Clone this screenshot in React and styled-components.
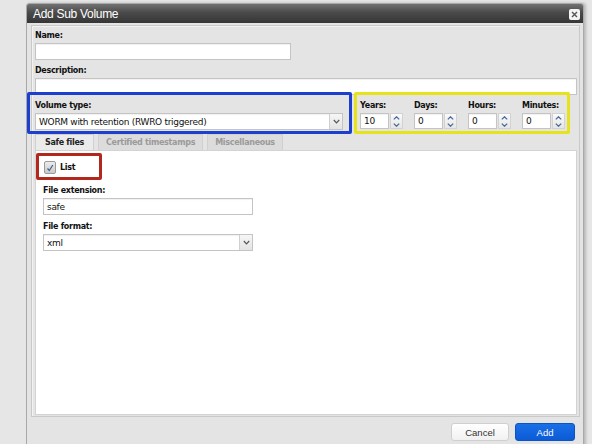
import React from "react";
import styled, { createGlobalStyle } from "styled-components";

const GlobalStyle = createGlobalStyle`
  html, body {
    margin: 0;
    padding: 0;
    background: #e6e6e6;
    font-family: "DejaVu Sans", Verdana, sans-serif;
    overflow: hidden;
  }
`;

const Page = styled.div`
  width: 592px;
  height: 444px;
  padding: 3px 0 0 26px;
  box-sizing: border-box;
  background: #e6e6e6;
`;

const Dialog = styled.div`
  width: 556px;
  height: 460px;
  background: #e4e4e4;
  border: 1px solid #a9a9a9;
  border-radius: 3px 3px 0 0;
  box-shadow: 2px 0 3px rgba(0, 0, 0, 0.2);
  display: flex;
  flex-direction: column;
`;

const TitleBar = styled.div`
  height: 19px;
  display: flex;
  align-items: center;
  justify-content: space-between;
  padding: 0 3px 0 6px;
  background: linear-gradient(#727272, #4a4a4a 45%, #363636);
  border-radius: 2px 2px 0 0;
`;

const Title = styled.span`
  color: #fff;
  font-family: "Liberation Sans", Arial, sans-serif;
  font-size: 12px;
  letter-spacing: -0.3px;
`;

const CloseButton = styled.div`
  width: 11px;
  height: 11px;
  background: #f4f4f4;
  border-radius: 2px;
  display: flex;
  align-items: center;
  justify-content: center;
  margin-top: 2px;
`;

const Body = styled.div`
  flex: 1;
  padding: 2px 3px 0 4px;
  display: flex;
  flex-direction: column;
`;

const FormPanel = styled.div`
  border: 1px solid #c9c9c9;
  box-shadow: inset 1px 1px 0 #f2f2f2;
  padding: 5px 2px 1px 3px;
  height: 392px;
  box-sizing: border-box;
  display: flex;
  flex-direction: column;
`;

const Field = styled.div`
  display: flex;
  flex-direction: column;
  margin-top: ${(p) => p.$mt || 0}px;
  margin-bottom: ${(p) => p.$mb || 0}px;
`;

const Label = styled.label`
  display: block;
  font-size: 8px;
  font-weight: bold;
  color: #111;
  line-height: 10px;
  height: 12px;
  letter-spacing: -0.3px;
`;

const TextInput = styled.div`
  width: ${(p) => (p.$w ? `${p.$w}px` : "auto")};
  height: 17px;
  box-sizing: border-box;
  background: #fff;
  border: 1px solid #c4c4c4;
  box-shadow: inset 0 1px 1px rgba(0, 0, 0, 0.06);
  font-size: 9px;
  letter-spacing: -0.3px;
  color: #111;
  display: flex;
  align-items: center;
  padding-left: 3px;
`;

const SelectBox = styled(TextInput)`
  justify-content: space-between;
  padding-right: 0;
`;

const SelectArrow = styled.div`
  width: 12px;
  height: 100%;
  border-left: 1px solid #d0d0d0;
  background: linear-gradient(#f6f6f6, #e3e3e3);
  display: flex;
  align-items: center;
  justify-content: center;
`;

const TypeRow = styled.div`
  display: flex;
  gap: 2px;
  margin: -3px 0 0 -8px;
`;

const Highlight = styled.div`
  border: 3px solid ${(p) => p.$color};
  border-radius: 2px;
  box-sizing: border-box;
  width: ${(p) => p.$w}px;
  height: ${(p) => p.$h}px;
  padding: ${(p) => p.$pad};
`;

const SpinRow = styled.div`
  display: grid;
  grid-template-columns: repeat(4, 54px);
`;

const SpinGroup = styled.div`
  display: flex;
  align-items: stretch;
  height: 16px;
`;

const SpinInput = styled(TextInput)`
  width: 29px;
  height: 16px;
`;

const SpinButtons = styled.div`
  width: 13px;
  display: flex;
  flex-direction: column;
  margin-left: 1px;
  border: 1px solid #d2d2d2;
  box-sizing: border-box;
  background: linear-gradient(#fafafa, #e6e6e6);
`;

const SpinHalf = styled.div`
  flex: 1;
  display: flex;
  align-items: center;
  justify-content: center;
`;

const Tabs = styled.div`
  display: flex;
  gap: 4px;
  height: 16px;
`;

const Tab = styled.div`
  height: 16px;
  box-sizing: border-box;
  padding: 0 ${(p) => (p.$active ? 9 : 7)}px;
  font-size: 8px;
  font-weight: bold;
  letter-spacing: -0.3px;
  color: ${(p) => (p.$active ? "#222" : "#9a9a9a")};
  background: ${(p) => (p.$active ? "#ebebeb" : "#dcdcdc")};
  border: 1px solid #d0d0d0;
  border-bottom: none;
  display: flex;
  align-items: center;
`;

const TabPanel = styled.div`
  flex: 1;
  background: #fff;
  border: 1px solid #d3d3d3;
  padding: 2px 0 0 0;
  display: flex;
  flex-direction: column;
  align-items: flex-start;
`;

const CheckRow = styled.div`
  display: flex;
  align-items: center;
  gap: 4px;
`;

const CheckBox = styled.div`
  width: 10px;
  height: 11px;
  border: 1px solid #9a9a9a;
  border-radius: 2px;
  background: linear-gradient(#ececec, #c9c9c9);
  display: flex;
  align-items: center;
  justify-content: center;
`;

const CheckLabel = styled.span`
  font-size: 8px;
  font-weight: bold;
  letter-spacing: -0.3px;
  color: #111;
`;

const Indented = styled.div`
  padding-left: 7px;
  display: flex;
  flex-direction: column;
`;

const Footer = styled.div`
  display: flex;
  justify-content: flex-end;
  gap: 6px;
  padding: 6px 5px 0 0;
`;

const Button = styled.div`
  width: ${(p) => p.$w}px;
  height: 18px;
  box-sizing: border-box;
  border-radius: 3px;
  display: flex;
  align-items: center;
  justify-content: center;
  font-family: "Liberation Sans", Arial, sans-serif;
  font-size: 9.5px;
  color: ${(p) => (p.$primary ? "#fff" : "#333")};
  background: ${(p) =>
    p.$primary ? "linear-gradient(#1a6fe6, #0b5bd6)" : "linear-gradient(#ffffff, #f1f1f1)"};
  border: 1px solid ${(p) => (p.$primary ? "#0a55c4" : "#cfcfcf")};
`;

const ChevronDown = () => (
  <svg width="7" height="5" viewBox="0 0 7 5">
    <path d="M0.8 1 L3.5 3.8 L6.2 1" fill="none" stroke="#555" strokeWidth="1.2" />
  </svg>
);

const Chevron = ({ up }) => (
  <svg width="7" height="4" viewBox="0 0 7 4">
    <path
      d={up ? "M0.8 3.4 L3.5 0.8 L6.2 3.4" : "M0.8 0.6 L3.5 3.2 L6.2 0.6"}
      fill="none"
      stroke="#4b6b98"
      strokeWidth="1.3"
    />
  </svg>
);

const spinners = [
  { label: "Years:", value: "10" },
  { label: "Days:", value: "0" },
  { label: "Hours:", value: "0" },
  { label: "Minutes:", value: "0" },
];

export default function App() {
  return (
    <Page>
      <GlobalStyle />
      <Dialog>
        <TitleBar>
          <Title>Add Sub Volume</Title>
          <CloseButton>
            <svg width="7" height="7" viewBox="0 0 7 7">
              <path d="M1 1 L6 6 M6 1 L1 6" stroke="#555" strokeWidth="1.4" />
            </svg>
          </CloseButton>
        </TitleBar>
        <Body>
          <FormPanel>
            <Field $mb={6}>
              <Label>Name:</Label>
              <TextInput $w={256} />
            </Field>
            <Field>
              <Label>Description:</Label>
              <TextInput />
            </Field>
            <TypeRow>
              <Highlight $color="#1c3fd0" $w={325} $h={42} $pad="6px 6px 0 5px">
                <Label>Volume type:</Label>
                <SelectBox>
                  WORM with retention (RWRO triggered)
                  <SelectArrow>
                    <ChevronDown />
                  </SelectArrow>
                </SelectBox>
              </Highlight>
              <Highlight $color="#e6e21c" $w={216} $h={42} $pad="6px 0 0 3px">
                <SpinRow>
                  {spinners.map((s) => (
                    <Field key={s.label}>
                      <Label>{s.label}</Label>
                      <SpinGroup>
                        <SpinInput>{s.value}</SpinInput>
                        <SpinButtons>
                          <SpinHalf>
                            <Chevron up />
                          </SpinHalf>
                          <SpinHalf>
                            <Chevron />
                          </SpinHalf>
                        </SpinButtons>
                      </SpinGroup>
                    </Field>
                  ))}
                </SpinRow>
              </Highlight>
            </TypeRow>
            <Tabs>
              <Tab $active>Safe files</Tab>
              <Tab>Certified timestamps</Tab>
              <Tab>Miscellaneous</Tab>
            </Tabs>
            <TabPanel>
              <Highlight $color="#b3281c" $w={66} $h={27} $pad="5px 0 0 5px">
                <CheckRow>
                  <CheckBox>
                    <svg width="8" height="8" viewBox="0 0 8 8">
                      <path d="M1.5 4.5 L3.3 6.5 L6.8 1" fill="none" stroke="#44618f" strokeWidth="1.2" />
                    </svg>
                  </CheckBox>
                  <CheckLabel>List</CheckLabel>
                </CheckRow>
              </Highlight>
              <Indented>
                <Field $mt={6} $mb={7}>
                  <Label>File extension:</Label>
                  <TextInput $w={210}>safe</TextInput>
                </Field>
                <Field>
                  <Label>File format:</Label>
                  <SelectBox $w={210}>
                    xml
                    <SelectArrow>
                      <ChevronDown />
                    </SelectArrow>
                  </SelectBox>
                </Field>
              </Indented>
            </TabPanel>
          </FormPanel>
          <Footer>
            <Button $w={58}>Cancel</Button>
            <Button $w={60} $primary>
              Add
            </Button>
          </Footer>
        </Body>
      </Dialog>
    </Page>
  );
}
